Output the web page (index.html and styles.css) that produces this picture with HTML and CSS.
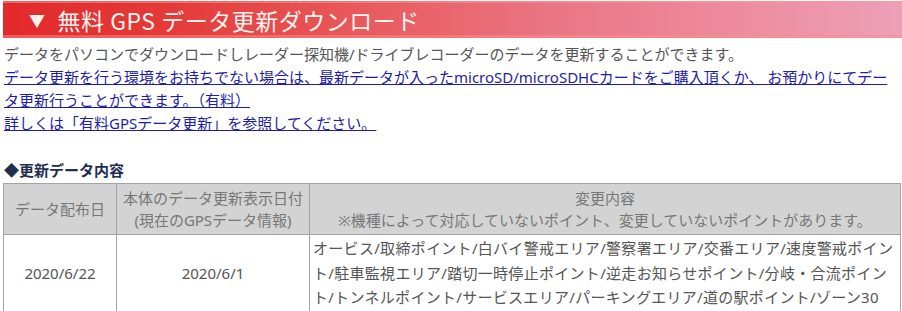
FILE: index.html
```html
<!DOCTYPE html>
<html lang="ja">
<head>
<meta charset="utf-8">
<title>無料 GPS データ更新ダウンロード</title>
<link rel="stylesheet" href="styles.css">
</head>
<body>
<div class="page">
  <h2 class="banner"><span class="tri">▼</span><span class="banner-text">無料 GPS データ更新ダウンロード</span></h2>
  <p class="intro">データをパソコンでダウンロードしレーダー探知機/ドライブレコーダーのデータを更新することができます。<br><a href="#">データ更新を行う環境をお持ちでない場合は、最新データが入ったmicroSD/microSDHCカードをご購入頂くか、 お預かりにてデータ更新行うことができます。（有料）</a><br><a href="#">詳しくは「有料GPSデータ更新」を参照してください。</a></p>
  <h3 class="sub">◆更新データ内容</h3>
  <table class="data">
    <colgroup>
      <col class="c1">
      <col class="c2">
      <col class="c3">
    </colgroup>
    <thead>
      <tr>
        <th>データ配布日</th>
        <th>本体のデータ更新表示日付<br>(現在のGPSデータ情報)</th>
        <th>変更内容<br>※機種によって対応していないポイント、変更していないポイントがあります。</th>
      </tr>
    </thead>
    <tbody>
      <tr>
        <td class="center">2020/6/22</td>
        <td class="center">2020/6/1</td>
        <td class="list">オービス/取締ポイント/白バイ警戒エリア/警察署エリア/交番エリア/速度警戒ポイン<br>ト/駐車監視エリア/踏切一時停止ポイント/逆走お知らせポイント/分岐・合流ポイン<br>ト/トンネルポイント/サービスエリア/パーキングエリア/道の駅ポイント/ゾーン30</td>
      </tr>
    </tbody>
  </table>
</div>
</body>
</html>
```

FILE: styles.css
```css
html, body {
  margin: 0;
  padding: 0;
  background: #fff;
}

.page {
  padding: 1px 2px 0 3px;
  font-family: "Noto Sans", "Noto Sans CJK JP", sans-serif;
  font-size: 15px;
  color: #555;
}

.banner {
  margin: 0 -3px 0 0;
  height: 37px;
  display: flex;
  align-items: center;
  padding-left: 26px;
  background: linear-gradient(to right, #e2292b 0%, #e43a38 18%, #e85a5c 40%, #ea7482 60%, #ed8a9c 80%, #eca0b8 100%);
  box-shadow: inset 0 2px 0 rgba(255, 150, 150, 0.55), inset 0 -3px 0 rgba(255, 140, 140, 0.5);
  color: #fff3f0;
  font-weight: normal;
  font-size: 22px;
  letter-spacing: 0.5px;
}

.tri {
  font-size: 16px;
  margin-right: 12px;
}

.banner-text {
  font-family: "Noto Sans CJK JP", sans-serif;
  font-size: 23px;
}

.intro {
  margin: 5px 7px 0 1px;
  line-height: 23px;
}

.intro a {
  color: #1d1da8;
  text-decoration: underline;
}

.sub {
  margin: 25px 0 3px 1px;
  font-size: 15px;
  line-height: 20px;
  font-weight: bold;
  color: #1e2d50;
}

.data {
  width: 898px;
  border-collapse: collapse;
  table-layout: fixed;
}

.c1 { width: 113px; }
.c2 { width: 193px; }

.data th,
.data td {
  border: 1px solid #a4a4a4;
}

.data th {
  background: #d3d3d3;
  color: #777;
  font-weight: normal;
  line-height: 22px;
  padding: 3px 2px;
  text-align: center;
}

.data td {
  line-height: 24.5px;
  padding: 1px 3px;
  background: #fff;
}

.data td.center {
  text-align: center;
  vertical-align: middle;
}

.data td.list {
  padding: 1px 2px 1px 3px;
  letter-spacing: 0.3px;
  white-space: nowrap;
  text-align: left;
}
```
